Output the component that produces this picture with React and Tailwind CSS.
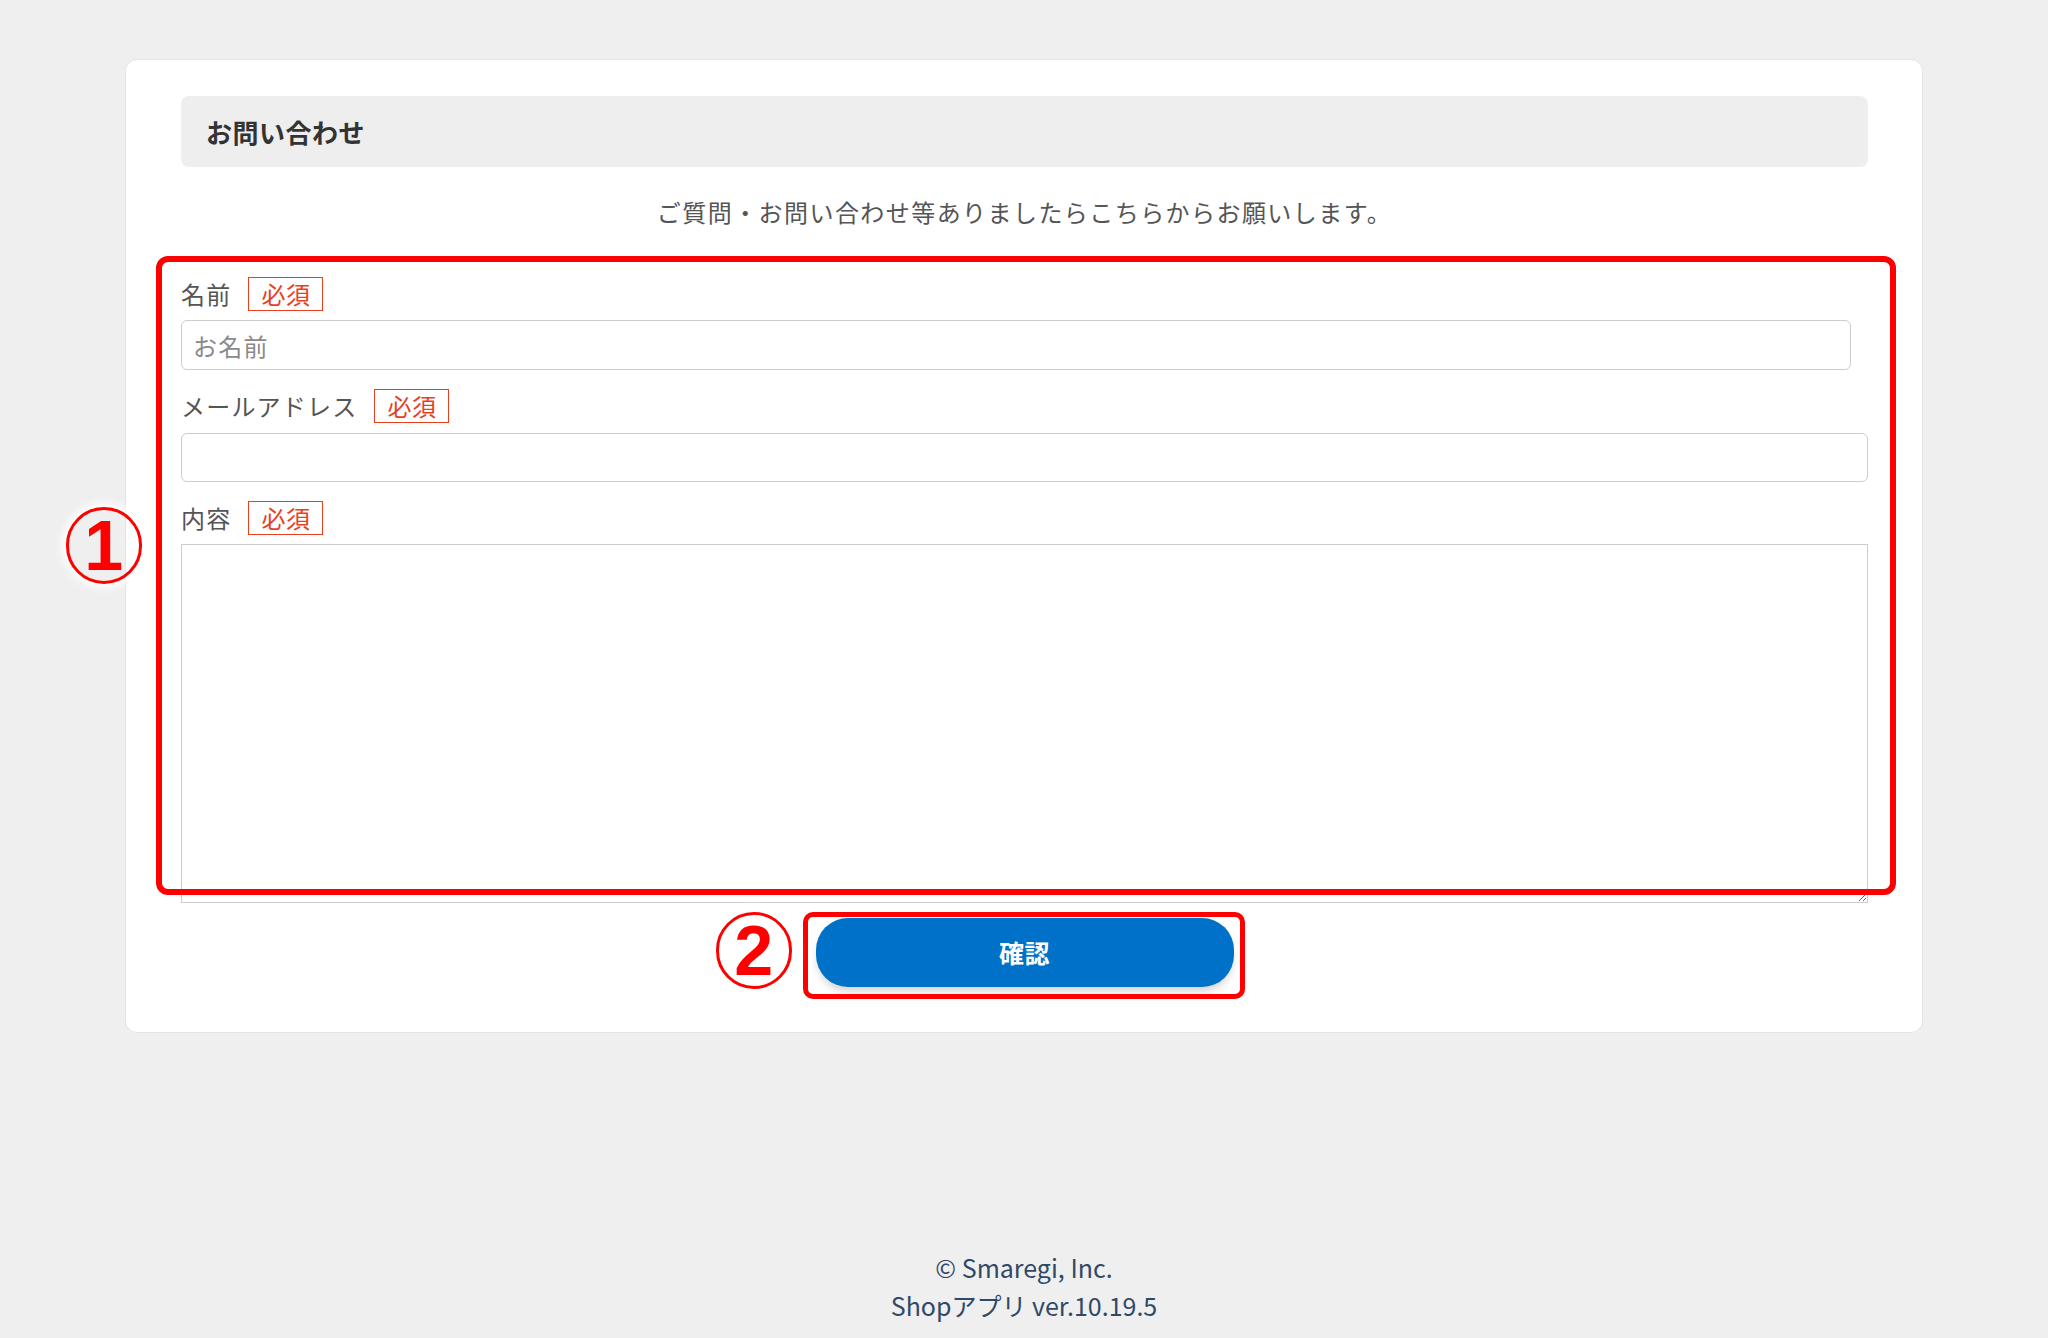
import React from "react";

function Required() {
  return (
    <span className="inline-flex h-[34px] items-center border border-[#e8401c] px-[12px] text-[24px] leading-none text-[#e8401c]">
      必須
    </span>
  );
}

function FieldLabel({ children }) {
  return (
    <div className="flex items-center gap-[17px]">
      <span className="text-[24px] leading-none tracking-[0.05em] text-[#555]">{children}</span>
      <Required />
    </div>
  );
}

function Marker({ n, className }) {
  return (
    <div
      className={
        "absolute flex h-[77px] w-[76px] items-center justify-center rounded-full border-[3px] border-[#ff0000] shadow-[0_0_10px_4px_#fff] " +
        className
      }
    >
      <span className="font-['Liberation_Sans',sans-serif] text-[70px] font-bold leading-none text-[#ff0000]">
        {n}
      </span>
    </div>
  );
}

export default function App() {
  return (
    <div className="min-h-[1338px] bg-[#efefef] pt-[59px] font-['Noto_Sans_CJK_JP','Noto_Sans',sans-serif] tracking-[0.03em]">
      <div className="relative mx-auto w-[1798px] rounded-xl border border-[#e4e4e4] bg-white pl-[55px] pr-[54px] pt-[36px] pb-[45px]">
        <div className="flex h-[71px] items-center rounded-lg bg-[#eeeeee] px-[25px]">
          <h1 className="text-[26px] font-bold text-[#333]">お問い合わせ</h1>
        </div>

        <p className="mt-[27px] text-center text-[24px] leading-[36px] tracking-[0.06em] text-[#555]">
          ご質問・お問い合わせ等ありましたらこちらからお願いします。
        </p>

        <form className="mt-[47px] flex flex-col">
          <FieldLabel>名前</FieldLabel>
          <input
            type="text"
            placeholder="お名前"
            className="mt-[9px] h-[50px] w-[1670px] rounded-md border-[1.5px] border-[#cccccc] px-[11px] text-[24px] tracking-[0.05em] text-[#333] outline-none placeholder:text-[#8a8a8a]"
          />

          <div className="mt-[19px]">
            <FieldLabel>メールアドレス</FieldLabel>
          </div>
          <input
            type="email"
            className="mt-[10px] h-[49px] w-full rounded-md border-[1.5px] border-[#cccccc] px-[11px] text-[24px] text-[#333] outline-none"
          />

          <div className="mt-[19px]">
            <FieldLabel>内容</FieldLabel>
          </div>
          <textarea className="mt-[9px] h-[359px] w-full border-[1.5px] border-[#cccccc] p-[11px] text-[24px] text-[#333] outline-none" />

          <button
            type="button"
            className="mx-auto mt-[15px] h-[69px] w-[418px] rounded-[32px] bg-[#0071c8] text-[25px] font-bold text-white shadow-[0_6px_8px_-2px_rgba(0,0,0,0.18)]"
          >
            確認
          </button>
        </form>

        {/* annotation overlays */}
        <div className="pointer-events-none absolute left-[30px] top-[196px] h-[639px] w-[1740px] rounded-[12px] border-[6px] border-[#ff0000]" />
        <Marker n="1" className="left-[-60px] top-[447px]" />
        <div className="pointer-events-none absolute left-[677px] top-[852px] h-[87px] w-[442px] rounded-[10px] border-[5px] border-[#ff0000]" />
        <Marker n="2" className="left-[590px] top-[852px]" />
      </div>

      <footer className="mt-[215px] text-center text-[25px] leading-[38px] tracking-normal text-[#2f4a68]">
        <p>© Smaregi, Inc.</p>
        <p>Shopアプリ ver.10.19.5</p>
      </footer>
    </div>
  );
}
